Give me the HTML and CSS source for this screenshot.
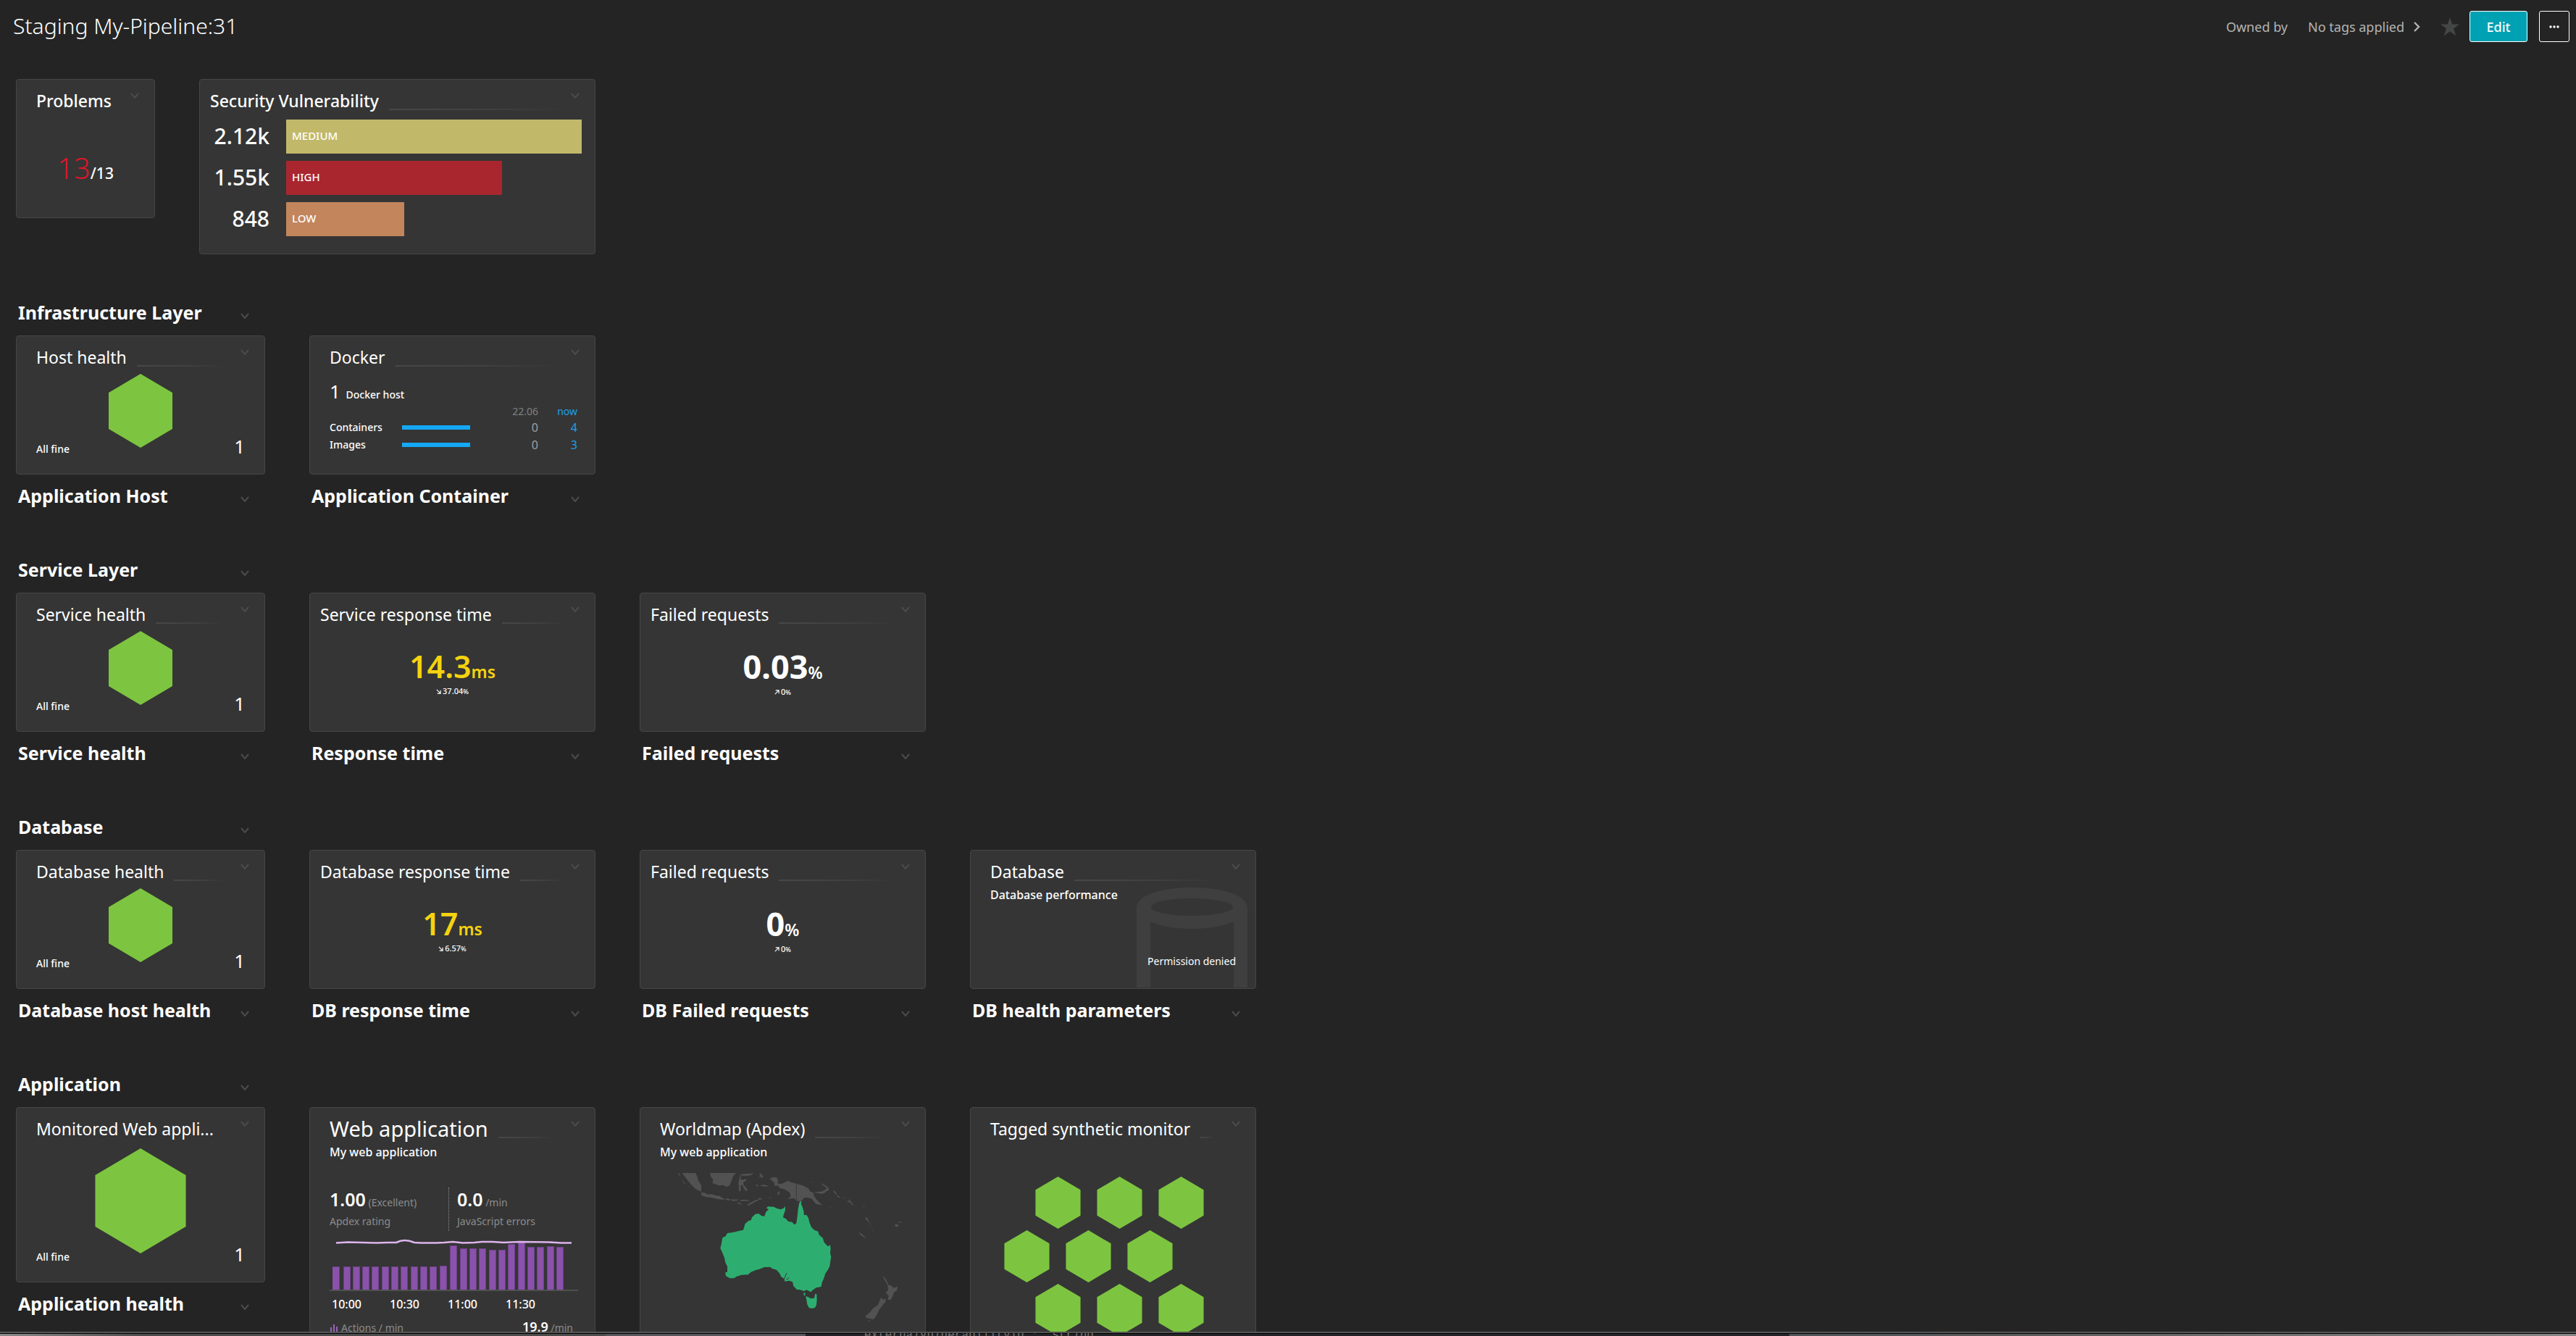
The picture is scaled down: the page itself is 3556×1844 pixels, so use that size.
FILE: index.html
```html
<!DOCTYPE html>
<html lang="en">
<head>
<meta charset="utf-8">
<title>Staging My-Pipeline:31</title>
<link rel="stylesheet" href="styles.css">
</head>
<body>
<svg class="defs" aria-hidden="true">
  <symbol id="chev" viewBox="0 0 12 8"><path d="M1 1l5 6 5-6" fill="none" stroke="currentColor" stroke-width="2"/></symbol>
  <symbol id="hex" viewBox="0 0 88 102"><path d="M44 0l44 26v50L44 102 0 76V26z" fill="#7dc540"/></symbol>
  <symbol id="up" viewBox="0 0 8 8"><path d="M1 7l6-6M2 1h5v5" fill="none" stroke="currentColor" stroke-width="1.3"/></symbol>
  <symbol id="down" viewBox="0 0 8 8"><path d="M1 1l6 6M7 2v5H2" fill="none" stroke="currentColor" stroke-width="1.3"/></symbol>
</svg>

<header class="topbar">
  <h1>Staging My-Pipeline:31</h1>
  <span class="owner">Owned by</span>
  <a class="tags" href="#">No tags applied <svg width="10" height="14" viewBox="0 0 10 14"><path d="M2 1l6 6-6 6" fill="none" stroke="currentColor" stroke-width="2.4"/></svg></a>
  <button class="star" aria-label="Favorite"><svg width="26" height="26" viewBox="0 0 26 26"><path d="M13 0l3.2 9.6H26l-8 6 3.400 10L13 19.600 4.600 25.600 8 15.600l-8-6h9.800z" fill="#454646"/></svg></button>
  <button class="btn btn-edit">Edit</button>
  <button class="btn btn-more" aria-label="More"><svg width="14" height="4" viewBox="0 0 14 4"><circle cx="2" cy="2" r="1.700"/><circle cx="7" cy="2" r="1.700"/><circle cx="12" cy="2" r="1.700"/></svg></button>
</header>

<main class="board">
  <section class="row intro">
    <article class="card problems">
      <div class="card-head"><h3>Problems</h3><i class="rule none"></i><button class="menu" aria-label="Menu"><svg><use href="#chev"/></svg></button></div>
      <p class="problem-count"><b>13</b>/13</p>
    </article>
    <article class="card tight security">
      <div class="card-head"><h3>Security Vulnerability</h3><i class="rule"></i><button class="menu" aria-label="Menu"><svg><use href="#chev"/></svg></button></div>
      <dl class="bars">
        <dt>2.12k</dt><dd><span class="bar medium" style="width:100%">MEDIUM</span></dd>
        <dt>1.55k</dt><dd><span class="bar high" style="width:73%">HIGH</span></dd>
        <dt>848</dt><dd><span class="bar low" style="width:40%">LOW</span></dd>
      </dl>
    </article>
  </section>

  <section class="row">
    <div class="label wide"><h2>Infrastructure Layer</h2><button class="menu" aria-label="Menu"><svg><use href="#chev"/></svg></button></div>
    <div class="tile">
      <article class="card">
        <div class="card-head"><h3>Host health</h3><i class="rule"></i><button class="menu" aria-label="Menu"><svg><use href="#chev"/></svg></button></div>
        <div class="health"><span>All fine</span><svg class="hex"><use href="#hex"/></svg><b>1</b></div>
      </article>
      <div class="label"><h2>Application Host</h2><button class="menu" aria-label="Menu"><svg><use href="#chev"/></svg></button></div>
    </div>
    <div class="tile">
      <article class="card">
        <div class="card-head"><h3>Docker</h3><i class="rule"></i><button class="menu" aria-label="Menu"><svg><use href="#chev"/></svg></button></div>
        <p class="docker-host"><b>1</b> Docker host</p>
        <table class="docker">
          <thead><tr><td></td><td></td><th>22.06</th><th class="now">now</th></tr></thead>
          <tbody>
            <tr><th>Containers</th><td><i class="spark"></i></td><td>0</td><td class="now">4</td></tr>
            <tr><th>Images</th><td><i class="spark"></i></td><td>0</td><td class="now">3</td></tr>
          </tbody>
        </table>
      </article>
      <div class="label"><h2>Application Container</h2><button class="menu" aria-label="Menu"><svg><use href="#chev"/></svg></button></div>
    </div>
  </section>

  <section class="row">
    <div class="label wide"><h2>Service Layer</h2><button class="menu" aria-label="Menu"><svg><use href="#chev"/></svg></button></div>
    <div class="tile">
      <article class="card">
        <div class="card-head"><h3>Service health</h3><i class="rule"></i><button class="menu" aria-label="Menu"><svg><use href="#chev"/></svg></button></div>
        <div class="health"><span>All fine</span><svg class="hex"><use href="#hex"/></svg><b>1</b></div>
      </article>
      <div class="label"><h2>Service health</h2><button class="menu" aria-label="Menu"><svg><use href="#chev"/></svg></button></div>
    </div>
    <div class="tile">
      <article class="card tight">
        <div class="card-head"><h3>Service response time</h3><i class="rule"></i><button class="menu" aria-label="Menu"><svg><use href="#chev"/></svg></button></div>
        <div class="metric"><p class="value warn">14.3<small>ms</small></p><p class="trend"><svg><use href="#down"/></svg>37.04<small>%</small></p></div>
      </article>
      <div class="label"><h2>Response time</h2><button class="menu" aria-label="Menu"><svg><use href="#chev"/></svg></button></div>
    </div>
    <div class="tile">
      <article class="card tight">
        <div class="card-head"><h3>Failed requests</h3><i class="rule"></i><button class="menu" aria-label="Menu"><svg><use href="#chev"/></svg></button></div>
        <div class="metric"><p class="value">0.03<small>%</small></p><p class="trend"><svg><use href="#up"/></svg>0<small>%</small></p></div>
      </article>
      <div class="label"><h2>Failed requests</h2><button class="menu" aria-label="Menu"><svg><use href="#chev"/></svg></button></div>
    </div>
  </section>

  <section class="row">
    <div class="label wide"><h2>Database</h2><button class="menu" aria-label="Menu"><svg><use href="#chev"/></svg></button></div>
    <div class="tile">
      <article class="card">
        <div class="card-head"><h3>Database health</h3><i class="rule"></i><button class="menu" aria-label="Menu"><svg><use href="#chev"/></svg></button></div>
        <div class="health"><span>All fine</span><svg class="hex"><use href="#hex"/></svg><b>1</b></div>
      </article>
      <div class="label"><h2>Database host health</h2><button class="menu" aria-label="Menu"><svg><use href="#chev"/></svg></button></div>
    </div>
    <div class="tile">
      <article class="card tight">
        <div class="card-head"><h3>Database response time</h3><i class="rule"></i><button class="menu" aria-label="Menu"><svg><use href="#chev"/></svg></button></div>
        <div class="metric"><p class="value warn">17<small>ms</small></p><p class="trend"><svg><use href="#down"/></svg>6.57<small>%</small></p></div>
      </article>
      <div class="label"><h2>DB response time</h2><button class="menu" aria-label="Menu"><svg><use href="#chev"/></svg></button></div>
    </div>
    <div class="tile">
      <article class="card tight">
        <div class="card-head"><h3>Failed requests</h3><i class="rule"></i><button class="menu" aria-label="Menu"><svg><use href="#chev"/></svg></button></div>
        <div class="metric"><p class="value">0<small>%</small></p><p class="trend"><svg><use href="#up"/></svg>0<small>%</small></p></div>
      </article>
      <div class="label"><h2>DB Failed requests</h2><button class="menu" aria-label="Menu"><svg><use href="#chev"/></svg></button></div>
    </div>
    <div class="tile">
      <article class="card database">
        <svg class="cylinder" viewBox="0 0 153 138"><path fill-rule="evenodd" fill="#3f3f3f" d="M0 138V28C0 10 36 0 76 0s77 10 77 28v110h-19V47c-12 6-34 10-58 10S31 53 19 47v91zM76 15c-31 0-56 5-56 12s25 12 56 12 57-5 57-12-26-12-57-12z"/></svg>
        <div class="card-head"><h3>Database</h3><i class="rule"></i><button class="menu" aria-label="Menu"><svg><use href="#chev"/></svg></button></div>
        <p class="sub">Database performance</p>
        <p class="denied">Permission denied</p>
      </article>
      <div class="label"><h2>DB health parameters</h2><button class="menu" aria-label="Menu"><svg><use href="#chev"/></svg></button></div>
    </div>
  </section>

  <section class="row">
    <div class="label wide"><h2>Application</h2><button class="menu" aria-label="Menu"><svg><use href="#chev"/></svg></button></div>
    <div class="tile">
      <article class="card tall">
        <div class="card-head"><h3>Monitored Web appli...</h3><i class="rule none"></i><button class="menu" aria-label="Menu"><svg><use href="#chev"/></svg></button></div>
        <div class="health large"><span>All fine</span><svg class="hex"><use href="#hex"/></svg><b>1</b></div>
      </article>
      <div class="label"><h2>Application health</h2><button class="menu" aria-label="Menu"><svg><use href="#chev"/></svg></button></div>
    </div>
    <div class="tile">
      <article class="card full">
        <div class="card-head"><h3 class="big">Web application</h3><i class="rule"></i><button class="menu" aria-label="Menu"><svg><use href="#chev"/></svg></button></div>
        <p class="sub">My web application</p>
        <div class="kpis">
          <div><p><b>1.00</b> (Excellent)</p><p>Apdex rating</p></div>
          <div><p><b>0.0</b> /min</p><p>JavaScript errors</p></div>
        </div>
        <svg class="chart" viewBox="0 0 343 74">
          <g fill="#6b4189"><path d="M4 39h10v32H4zM19 39h10v32H19zM32 39h10v32H32zM45 39h10v32H45zM58 39h10v32H58zM72 39h10v32H72zM85 39h10v32H85zM98 39h10v32H98zM112 39h10v32h-10zM125 39h10v32h-10zM138 39h10v32h-10zM152 38h10v33h-10zM166 10h10v61h-10zM180 14h10v57h-10zM193 14h10v57h-10zM206 14h10v57h-10zM220 16h10v55h-10zM233 16h10v55h-10zM246 8h10v63h-10zM260 4h10v67h-10zM273 12h10v59h-10zM286 12h10v59h-10zM300 11h10v60h-10zM313 12h10v59h-10z"/></g>
          <g fill="#8a52aa"><path d="M4 40h9v31H4zM20 40h8v31h-8zM33 40h8v31h-8zM46 40h8v31h-8zM59 40h8v31h-8zM73 40h8v31h-8zM86 40h8v31h-8zM99 40h8v31h-8zM113 40h8v31h-8zM126 40h8v31h-8zM139 40h8v31h-8zM153 39h8v32h-8zM167 11h8v60h-8zM181 15h8v56h-8zM194 15h8v56h-8zM207 15h8v56h-8zM221 17h8v54h-8zM234 17h8v54h-8zM247 9h8v62h-8zM261 5h8v66h-8zM274 13h8v58h-8zM287 13h8v58h-8zM301 12h8v59h-8zM314 13h8v58h-8z"/></g>
          <path d="M0 72h343" stroke="#5a5a5a" stroke-width="1.500"/>
          <path d="M9 6.500L25 5.500 65 6.500 80 6 92 6Q103 0 117 6Q135 7 158 6L170 5 184 6.500 200 6 210 5 225 5 240 6 262 5 303 5.500 320 6.500H334" fill="none" stroke="#dcb4ec" stroke-width="2.600"/>
        </svg>
        <div class="ticks"><span>10:00</span><span>10:30</span><span>11:00</span><span>11:30</span></div>
        <div class="legend"><svg width="12" height="10" viewBox="0 0 12 10"><path d="M1 4h2v6H1zM5 0h2v10H5zM9 3h2v7H9z" fill="#9a62bc"/></svg><span>Actions / min</span><p><b>19.9</b> /min</p></div>
      </article>
    </div>
    <div class="tile">
      <article class="card full">
        <div class="card-head"><h3>Worldmap (Apdex)</h3><i class="rule"></i><button class="menu" aria-label="Menu"><svg><use href="#chev"/></svg></button></div>
        <p class="sub">My web application</p>
        <svg class="map" viewBox="96 54 957 630">
          <g fill="#525252">
            <path d="M125 54L180 54 188 70 190 82 204 104 204 132 180 120 165 105 148 85z"/>
            <path d="M107 54l7 3 4 10-5-3zM122 78l16 20-4 1zM146 106l10 5-3 1z"/>
            <path d="M240 54L348 54 335 70 328 90 322 106 308 112 296 104 276 106 262 100 250 96 254 82 244 70z"/>
            <path d="M204 134L222 137 230 143 250 142 262 147 282 149 286 155 299 160 298 165 272 162 246 156 222 153 205 146z"/>
            <path d="M304 160l10 0 12 4-6 4-14-3zM328 162l10 2 16-1 2 5-18 2-10-3zM364 166l18-2 6 2 14-1-2 5-34 0zM350 175l16 3 6 8-14-5zM394 187l12-9 26-13 12 0-22 12-22 12zM438 160l14-2 6 3-14 5zM486 157l8-4-3 6zM521 132l6-2 2 8-5 8-4-2z"/>
            <path d="M358 96L362 76 368 60 380 58 412 56 418 54 418 58 408 64 384 66 370 64 366 80 378 82 392 78 390 86 378 92 380 104 390 114 396 126 390 130 380 118 376 106 368 104 368 128 360 130 360 110z"/>
            <path d="M444 56l5 2 5-2 2 8 6 3-5 5 4 4-7-1-2-7-6 3-1-5 4-4zM430 102l10 2-1 6-8-2zM450 104l16-1 16 4-4 3-26-1z"/>
            <path d="M488 78L500 72 516 72 522 84 520 96 530 100 545 96 562 86 575 92 598 98 625 106 648 118 655 130 672 138 668 145 682 165 705 187 680 183 660 160 640 155 628 158 620 170 600 170 588 158 562 162 575 150 570 135 550 122 528 116 522 106 508 108 506 94z"/>
            <path d="M675 132l26-1 10-4 12-8 0-5 9 2 0 10-10 4-8 8-12 2-26-5zM700 95l14 8 14 10 1 6-8-4-12-9zM662 90l7 1-2 3zM752 124l10 10 4 12-7-5-7-10zM766 146l14 8-3 3-12-7zM786 152l14 8-2 3zM808 170l6-1 5 8-7-2zM814 160l14 18 8 10-6-1-12-14zM734 196l8 1-2 3z"/>
            <path d="M876 190h4v4h-4zM884 235l10 8 3 12-6-2-6-9zM894 250l10 10-2 3zM900 266l6 6-2 3zM910 284l6 8-2 2zM857 298l14 10 18 17-8-3-18-12zM1006 267l12-1 4 7-8 4-9-3zM1018 260l14-6 2 3-12 5z"/>
            <path d="M954 480L966 490 974 505 980 518 990 520 1000 530 1018 524 1014 540 1002 548 998 562 988 580 976 578 980 564 968 548 978 540 976 518z"/>
            <path d="M948 570L958 578 968 574 968 586 955 602 940 622 932 640 918 660 905 658 888 654 884 646 900 634 916 614 936 600zM898 664l6 0-6 6-3-2z"/>
          </g>
          <g fill="#2dae70">
            <path d="M613 171L620 173 617 180 622 192 628 210 630 228 640 228 648 240 652 258 660 278 672 290 688 296 692 310 708 324 712 340 728 358 738 352 740 370 738 385 742 402 738 425 736 440 728 456 718 470 712 490 704 508 701 525 680 529 664 540 658 547 640 538 630 543 612 537 600 537 586 522 582 505 568 500 550 503 548 492 535 484 530 472 516 455 498 450 490 443 465 444 445 452 430 456 410 464 398 475 370 476 350 483 340 490 322 490 306 480 304 466 312 464 312 440 304 425 300 405 290 380 283 366 288 345 292 322 305 316 312 303 335 300 360 294 378 290 386 264 400 252 410 250 414 238 428 224 442 222 454 232 466 233 472 215 484 204 474 200 480 193 505 194 516 200 532 205 545 200 552 192 552 208 545 228 543 238 555 244 565 255 580 257 590 268 598 262 602 235 605 205 609 182z"/>
            <path d="M628 550l6 0 1 10-6 2zM637 564L647 568 658 574 672 572 676 554 682 556 683 580 681 600 675 612 662 615 650 612 643 598z"/>
          </g>
          <path d="M598 98v72" stroke="#3b3b3b" stroke-width="3"/>
          <path d="M558 468l-6 14-4 10M568 488l-12 8" stroke="#353535" stroke-width="3" fill="none"/>
        </svg>
      </article>
    </div>
    <div class="tile">
      <article class="card full">
        <div class="card-head"><h3>Tagged synthetic monitor</h3><i class="rule"></i><button class="menu" aria-label="Menu"><svg><use href="#chev"/></svg></button></div>
        <div class="honeycomb">
          <div><svg><use href="#hex"/></svg><svg><use href="#hex"/></svg><svg><use href="#hex"/></svg></div>
          <div class="odd"><svg><use href="#hex"/></svg><svg><use href="#hex"/></svg><svg><use href="#hex"/></svg></div>
          <div><svg><use href="#hex"/></svg><svg><use href="#hex"/></svg><svg><use href="#hex"/></svg></div>
        </div>
      </article>
    </div>
  </section>
</main>
<footer class="edge"><span>externalVulnerabilityId :  string</span></footer>
</body>
</html>
```
FILE: styles.css
```css
* { box-sizing: border-box; }

body {
  margin: 0;
  height: 100vh;
  display: flex;
  flex-direction: column;
  overflow: hidden;
  background: #242424;
  color: #fff;
  font-family: "Noto Sans", "Open Sans", sans-serif;
  font-size: 14px;
}

h1, h2, h3, p, dl, dd { margin: 0; }
button { font: inherit; color: inherit; background: none; border: 0; padding: 0; }
i { font-style: normal; }
.defs { position: absolute; width: 0; height: 0; }

/* Top bar */
.topbar {
  flex: none;
  display: flex;
  align-items: center;
  height: 73px;
  padding: 0 9px 0 18px;
  color: #b4b4b4;
  font-size: 18px;
}
.topbar h1 { flex: 1; padding-bottom: 2px; color: #fff; font-size: 30px; font-weight: 300; }
.owner { margin-right: 28px; }
.tags { display: flex; align-items: center; gap: 12px; margin-right: 28px; color: inherit; text-decoration: none; }
.star { display: flex; margin-right: 14px; }
.btn { height: 43px; border: 1px solid #fff; border-radius: 3px; }
.btn-edit { width: 80px; margin-right: 16px; background: #00a1b2; color: #fff; font-weight: 500; }
.btn-more { width: 42px; display: flex; align-items: center; justify-content: center; fill: #fff; }

/* Board */
.board { flex: 1; min-height: 0; overflow: hidden; padding: 36px 22px 0; }
.row {
  display: grid;
  grid-template-columns: 344px repeat(3, 395px);
  column-gap: 61px;
  align-items: start;
  margin-bottom: 41px;
}
.intro { grid-template-columns: 192px 547px; margin-bottom: 51px; }

.label { display: flex; align-items: center; justify-content: space-between; height: 61px; padding: 0 22px 3px 3px; }
.label.wide { grid-column: 1 / -1; width: 344px; }
.label h2 { font-size: 25px; font-weight: 700; line-height: 32px; white-space: nowrap; }
.menu { display: flex; color: #4b4b4b; }
.menu svg { width: 12px; height: 8px; }
.label .menu { padding-top: 9px; }

/* Cards */
.card {
  position: relative;
  display: flex;
  flex-direction: column;
  height: 192px;
  padding: 13px 27px 0;
  background: #353535;
  border: 1px solid #454646;
  border-radius: 4px;
}
.card.tight { padding: 13px 14px 0; }
.card.tall { height: 242px; }
.card.full { height: 376px; }
.card.security { height: 242px; }
.card-head { flex: none; display: flex; align-items: flex-start; height: 33px; margin-right: -6px; }
.tight .card-head { margin-right: 7px; }
.card-head h3 { font-size: 23px; font-weight: 400; line-height: 32px; white-space: nowrap; }
.intro .card-head h3 { font-weight: 500; }
.card-head h3.big { font-size: 29px; }
.rule { flex: 1; height: 2px; margin: 27px 26px 0 14px; background: linear-gradient(90deg, #484848, #404040 60%, #363636); }
.tight .rule { margin-right: 13px; }
.rule.none { margin: 0; background: none; }
.card-head .menu { padding-top: 5px; }
.problems .card-head { margin-right: -6px; }
.sub { font-size: 16px; font-weight: 500; line-height: 20px; margin-top: 5px; }

/* Problems */
.problem-count { margin-top: 52px; text-align: center; font-size: 21px; font-weight: 500; line-height: 48px; }
.problem-count b { font-size: 40px; font-weight: 300; color: #dc172a; }

/* Vulnerability bars */
.bars { display: grid; grid-template-columns: 82px 1fr; column-gap: 23px; row-gap: 10px; padding: 9px 4px 0 0; }
.bars dt { font-size: 30px; font-weight: 500; line-height: 45px; text-align: right; }
.bar { display: block; height: 47px; padding-left: 8px; font-size: 15px; font-weight: 500; line-height: 44px; }
.medium { background: #c1b86a; }
.high { background: #a9262f; }
.low { background: #c3855c; }

/* Health */
.health { display: grid; grid-template-columns: 1fr auto 1fr; align-items: end; height: 122px; padding-top: 6px; line-height: 24px; font-weight: 500; }
.health .hex { width: 88px; height: 102px; align-self: start; }
.health b { text-align: right; font-size: 26px; font-weight: 400; line-height: 32px; }
.health.large { height: 172px; padding-top: 10px; }
.health.large .hex { width: 126px; height: 145px; }

/* Docker */
.docker-host { margin-top: 17px; line-height: 26px; font-weight: 500; }
.docker-host b { font-size: 26px; font-weight: 400; margin-right: 4px; }
.docker { width: calc(100% + 3px); border-collapse: collapse; table-layout: fixed; text-align: right; color: #a0a0a0; font-size: 16px; line-height: 24px; }
.docker th, .docker td { padding: 0; font-weight: 400; }
.docker th { font-size: 14px; color: #808080; }
.docker thead { line-height: 20px; }
.docker tbody th { text-align: left; color: #fff; font-weight: 500; }
.docker .now { color: #1ea0e6; width: 54px; }
.docker thead td:nth-child(1) { width: 100px; }
.docker thead td:nth-child(2) { width: 94px; }
.spark { display: block; height: 6px; background: #14a8f5; }

/* Metrics */
.metric { padding-top: 34px; text-align: center; }
.value { font-size: 45px; font-weight: 700; line-height: 42px; }
.value small { font-size: 23px; font-weight: 600; }
.value.warn { color: #f5d30f; font-size: 43px; font-weight: 600; }
.trend { display: flex; align-items: baseline; justify-content: center; gap: 2px; font-size: 11px; font-weight: 500; line-height: 12px; }
.trend svg { width: 7px; height: 7px; }
.trend small { font-size: 9px; margin-left: -2px; }

/* Database */
.cylinder { position: absolute; right: 11px; bottom: 1px; width: 153px; height: 138px; }
.card-head, .database .sub { position: relative; }
.denied { position: relative; margin-top: 72px; text-align: right; line-height: 20px; }

/* Web application */
.kpis { display: grid; grid-template-columns: 164px 1fr; margin-top: 39px; color: #8c8c8c; line-height: 19px; }
.kpis b { color: #fff; font-size: 25px; font-weight: 600; }
.kpis p:first-child { line-height: 32px; }
.kpis div { padding-bottom: 4px; }
.kpis div + div { border-left: 1px dotted #8c8c8c; padding-left: 11px; }
.chart { flex: none; width: 343px; height: 74px; margin-top: 10px; }
.ticks { display: flex; width: 322px; margin-top: 5px; padding-left: 3px; font-size: 16px; font-weight: 500; line-height: 24px; }
.ticks span { flex: none; width: 80px; }
.legend { display: flex; align-items: baseline; gap: 4px; margin-top: 7px; padding-right: 3px; color: #8c8c8c; line-height: 24px; }
.legend p { margin-left: auto; }
.legend b { color: #fff; font-size: 18px; font-weight: 600; }

.map { width: 319px; height: 210px; margin: 19px 0 0 21px; }

.honeycomb { display: flex; flex-direction: column; gap: 2px; padding: 49px 0 0 19px; }
.honeycomb div { display: flex; gap: 22px; padding-left: 43px; }
.honeycomb .odd { padding-left: 0; }
.honeycomb svg { width: 63px; height: 72px; }

/* Window edge */
.edge {
  flex: none;
  height: 6px;
  overflow: hidden;
  padding-left: 1193px;
  border-top: 2px solid #555655;
  box-shadow: inset 0 1px #000;
  background: linear-gradient(90deg, #8a8a8a, #4c4c4c 200px, #4c4c4c 836px, #56585c 836px, #56585c 1112px, #242328 1112px, #242328 2470px, #4e5458 2470px, #58595a 2760px, #858585);
  color: #777;
  font-family: "Liberation Mono", monospace;
  font-size: 16px;
  line-height: 6px;
  white-space: pre;
}
```
